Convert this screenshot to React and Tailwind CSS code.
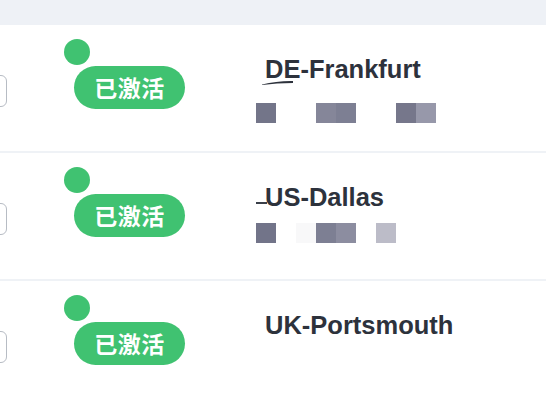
import React from "react";

const rows = [
  {
    name: "DE-Frankfurt",
    mark: "swoosh",
    blockTop: "mt-[19px]",
    cells: ["#737589", null, null, "#858699", "#7d7f93", null, null, "#76778b", "#9798aa"],
  },
  {
    name: "US-Dallas",
    mark: "line",
    blockTop: "mt-[11px]",
    cells: ["#727489", null, "#f8f8f9", "#7d7f93", "#8c8da0", null, "#bcbcc8"],
  },
  {
    name: "UK-Portsmouth",
    mark: null,
    blockTop: "mt-[11px]",
    cells: [],
  },
];

function Mark({ type }) {
  if (type === "swoosh") {
    return (
      <svg className="absolute left-[4px] top-[24px]" width="40" height="8" viewBox="0 0 40 8">
        <path d="M2 6.5 C 12 4.2, 22 2.8, 33 3 L 33 5 C 22 5, 12 5.8, 2 7 Z" fill="#2d323c" />
      </svg>
    );
  }
  if (type === "line") {
    return <div className="absolute left-0 top-[20px] w-[11px] h-[2px] bg-[#3a3f49]" />;
  }
  return null;
}

function Row({ row }) {
  return (
    <div className="flex h-[128px] border-b-2 border-[#eff2f6]">
      {/* checkbox, clipped by the left edge */}
      <div className="ml-[-23px] mt-[50px] w-[30px] h-[32px] rounded-[6px] border-[1.5px] border-[#b7bcc4] bg-white shrink-0" />

      {/* status */}
      <div className="ml-[57px] pt-[14px] flex flex-col shrink-0">
        <div className="w-[26px] h-[26px] rounded-full bg-[#40c271]" />
        <div className="ml-[10px] mt-[1px] w-[111px] h-[43px] rounded-full bg-[#40c271] flex items-center justify-center text-white text-[23px] font-bold leading-none tracking-[0.5px] font-['Noto_Sans_CJK_SC',sans-serif]">
          已激活
        </div>
      </div>

      {/* location */}
      <div className="ml-[71px] pt-[29px] flex flex-col">
        <div className="relative pl-[9px] text-[25.5px] leading-[30px] font-bold text-[#2d323c] whitespace-nowrap">
          <Mark type={row.mark} />
          {row.name}
        </div>
        {row.cells.length > 0 && (
          <div className={`flex ${row.blockTop}`}>
            {row.cells.map((c, i) => (
              <div key={i} className="w-[20px] h-[20px]" style={{ backgroundColor: c || "transparent" }} />
            ))}
          </div>
        )}
      </div>
    </div>
  );
}

export default function App() {
  return (
    <div className="w-[546px] h-[406px] overflow-hidden bg-white font-['Liberation_Sans',Arial,sans-serif]">
      <div className="h-[25px] bg-[#eef1f6]" />
      {rows.map((r) => (
        <Row key={r.name} row={r} />
      ))}
    </div>
  );
}
